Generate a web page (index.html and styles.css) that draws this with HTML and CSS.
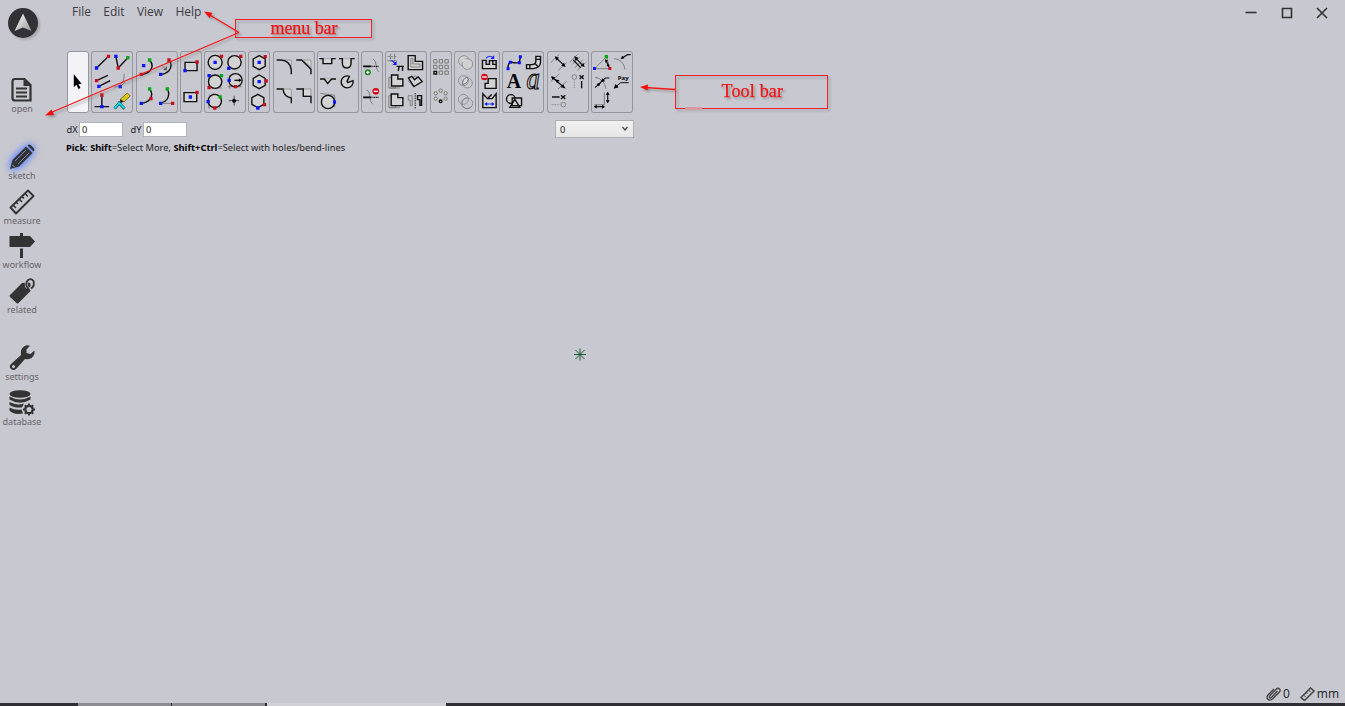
FILE: index.html
```html
<!DOCTYPE html>
<html lang="en">
<head>
<meta charset="utf-8">
<title>Sketch</title>
<link rel="stylesheet" href="styles.css">
</head>
<body>
<div class="app">
  <aside class="side">
    <svg class="logo" width="40" height="42" viewBox="0 0 40 42"><defs><linearGradient id="m" x1="0" x2="1" y1="0" y2="1"><stop offset="0" stop-color="#fff"/><stop offset="1" stop-color="#999"/></linearGradient></defs><circle cx="20" cy="20" r="15" fill="#313136"/><path d="M20 10.500 28.500 28 20 24.500 11.500 28Z" fill="url(#m)"/></svg>
    <a class="nav open"><svg viewBox="0 0 26 26"><path d="M6 2H15.500L21.500 8V23.500H6Q3.500 23.500 3.500 21V4.500Q3.500 2 6 2Z" fill="none" stroke="#333" stroke-width="2.200"/><path d="M14.500 2V9H21.500Z" fill="#333"/><path d="M7 11.500H18M7 15.500H18M7 19.500H18" stroke="#333" stroke-width="1.800"/></svg><span>open</span></a>
    <a class="nav sketch"><svg viewBox="0 0 26 26"><path d="M1 25 3.500 16 17 2.500 23.500 9 10 22.500Z"/><path d="M18.500 1.500Q20 0 21.500 1L25 4.500Q26 6 24.500 7.500Z"/><path d="M6 17 17 6M9 20 20 9" stroke="#7688c4" stroke-width="1"/><path d="M3.500 21 5.500 23" stroke="#9ab" stroke-width="1"/></svg><span>sketch</span></a>
    <a class="nav measure"><svg viewBox="0 0 26 26"><path d="M1.500 18.500 19 1.500 24.500 7 7 24.500Z" fill="none" stroke="#333" stroke-width="1.900" stroke-linejoin="round"/><path d="M4 16 7 19M7 13 9 15M10 10 13 13M13 7.500 15 9.500M16 4.500 19 7.500" stroke="#333" stroke-width="1.600"/></svg><span>measure</span></a>
    <a class="nav"><svg viewBox="0 0 26 26"><path d="M11 0H14V3H21L26 8.500 21 14H0.500V3H11ZM11 15.500H14V25H11Z"/></svg><span>workflow</span></a>
    <a class="nav related"><svg viewBox="0 0 26 26"><path d="M1 17 13 5 20 4.500Q22 5 21.500 7V13L9.500 25Q8.500 26 7.500 25L1 19Q0 18 1 17Z"/><path d="M18.500 10Q16 6 18.500 2.500 22-.5 24.500 3 26 8 20.500 11" fill="none" stroke="#c8c8d0" stroke-width="3"/><path d="M18.500 10Q16 6 18.500 2.500 22-.5 24.500 3 26 8 22 10.500" fill="none" stroke="#333" stroke-width="1.800"/></svg><span>related</span></a>
    <a class="nav settings"><svg viewBox="0 0 26 26"><path fill-rule="evenodd" d="M12 10Q11 4 15 1.500 18-.5 21 .8L17.500 4.500V8L21.500 9 25.500 5.500Q26 10 22.500 13 19 15 16 14L7 24Q4.500 26 2 24 -.5 21.500 2 19ZM4.500 20A1.500 1.500 0 1 0 4.500 23 1.500 1.500 0 1 0 4.500 20Z"/></svg><span>settings</span></a>
    <a class="nav database"><svg viewBox="0 0 26 26"><ellipse cx="11" cy="4" rx="10.500" ry="3.800"/><path d="M.5 6.500Q11 12.500 21.500 6.500V9.500Q11 16 .5 9.500ZM.5 12Q8 16 15 13.500L13 17.500Q5 18 .5 15ZM.5 17.500Q6 20.500 12.500 19.500L14 23.500Q4 25 .5 20.500Z"/><circle cx="20" cy="19.500" r="3.700" fill="none" stroke="#333" stroke-width="2.300"/><path d="M20 13.500V16M20 23V25.500M14 19.500H16.500M23.500 19.500H26M15.800 15.300 17.500 17M22.500 22 24.200 23.700M15.800 23.700 17.500 22M22.500 17 24.200 15.300" stroke="#333" stroke-width="2"/></svg><span>database</span></a>
  </aside>

  <main class="main">
    <header class="top">
      <nav class="menu"><span>File</span><span>Edit</span><span>View</span><span>Help</span></nav>
      <div class="win">
        <svg viewBox="0 0 12 12"><path d="M.5 5.500H11.500"/></svg>
        <svg viewBox="0 0 12 12"><path d="M1.500 1.500H10.500V10.500H1.500Z"/></svg>
        <svg viewBox="0 0 12 12"><path d="M1 1 11 11M11 1 1 11"/></svg>
      </div>
    </header>

    <div class="tools">
      <div class="grp on"><svg viewBox="21.600 18 66 186"><path d="M42 88V127L50 119 56 132 62 129 56 117H66Z" fill="#000"/></svg></div>

      <div class="grp wide"><svg viewBox="94.400 18 126 186">
        <path class="k" d="M111 69 147 34M169 34 176 69 205 38M111 107 145 91M118 124 152 107M105 185H149M127 185V150"/>
        <path class="g" d="M164 127Q196 123 194 86M182 125 197 111"/>
        <path d="M165 191 179 174 195 191" fill="none" stroke="#064b55" stroke-width="9"/><path d="M165 190 179 174 195 190" fill="none" stroke="#12e6f2" stroke-width="5"/>
        <path d="M182 163 203 144 212 153 193 171Z" fill="#d9c51c" stroke="#584e00" stroke-width="2"/><path d="M182 163 193 171 182 173Z" fill="#111"/>
        <path class="b" d="M106 64h10v10h-10zM164 29h10v10h-10zM113 119h10v10h-10zM177 120h10v10h-10zM122 180h10v10h-10z"/>
        <path class="r" d="M142 29h10v10h-10zM171 64h10v10h-10zM106 102h10v10h-10zM122 145h10v10h-10z"/>
        <path class="n" d="M200 33h10v10h-10z"/></svg></div>

      <div class="grp wide"><svg viewBox="227.100 18 126 186">
        <path class="k" d="M268 45Q282 62 269 78 259 87 243 88M326 45Q339 60 326 77 316 87 301 88M268 132Q280 147 269 163 259 174 243 175M321 132Q330 148 320 163 313 172 301 175"/>
        <path class="g" d="M303 60 316 72M327 45 315 57M301 175H337"/><path d="M308 76 320 76 320 64Z" fill="#555"/>
        <path class="b" d="M245 57h10v10h-10zM296 83h10v10h-10zM238 170h10v10h-10zM296 170h10v10h-10z"/>
        <path class="r" d="M238 83h10v10h-10zM321 40h10v10h-10zM267 156h10v10h-10zM332 170h10v10h-10z"/>
        <path class="n" d="M263 40h10v10h-10zM263 127h10v10h-10zM316 127h10v10h-10z"/></svg></div>

      <div class="grp"><svg viewBox="359.900 18 66 186">
        <path class="kf" d="M375 52H411V77H375ZM372 143H410V170H372Z"/>
        <path class="b" d="M370 72h10v10h-10zM386 151h10v10h-10z"/><path class="r" d="M406 46h10v10h-10zM406 137h10v10h-10z"/></svg></div>

      <div class="grp wide"><svg viewBox="12.600 18 126 186">
        <path class="g" d="M27 92V129H66M83 125H125M90 91V131M28 148 62 190M39 145 67 162M25 164 28 191"/>
        <g class="kf"><circle cx="46" cy="52" r="21"/><circle cx="104" cy="52" r="20"/><circle cx="46" cy="110" r="20"/><circle cx="107" cy="106" r="20"/><circle cx="45" cy="168" r="20"/></g>
        <path class="k" d="M104 106H122"/><path d="M117 100 125 106 117 112Z"/><path class="k" d="M87 167H118M103 152V182" style="stroke-width:2"/><circle cx="103" cy="167" r="6"/>
        <path class="b" d="M41 47h10v10h-10zM82 65h10v10h-10zM23 87h10v10h-10zM83 101h10v10h-10zM20 165h10v10h-10z"/>
        <path class="r" d="M60 29h10v10h-10zM118 29h10v10h-10zM23 123h10v10h-10zM102 120h10v10h-10zM40 184h10v10h-10z"/>
        <path class="n" d="M60 87h10v10h-10zM56 151h10v10h-10z"/></svg></div>

      <div class="grp"><svg viewBox="145.400 18 66 186">
        <path class="kf" d="M179 32 197 42V64L179 74 161 64V42ZM179 90 197 100V121L179 131 161 121V100ZM175 148 193 158V178L175 188 157 178V158Z"/>
        <path class="b" d="M174 47h10v10h-10zM174 105h10v10h-10zM170 184h10v10h-10z"/><path class="r" d="M192 30h10v10h-10zM195 103h10v10h-10zM190 174h10v10h-10z"/></svg></div>

      <div class="grp wide"><svg viewBox="218.100 18 126 186">
        <path d="M250 45H273V73Q270 52 250 45ZM310 45H332V68ZM248 132H273V158Q252 153 248 132ZM309 132H332V153H309Z" fill="#d5d5d5" stroke="#999" stroke-width="3"/>
        <path class="k" d="M229 45H242Q270 47 273 75V88M288 45H304L332 73V88M229 132H248Q251 156 273 159V175M288 132H309V154H332V175"/></svg></div>

      <div class="grp wide"><svg viewBox="14.900 18 126 186">
        <path d="M33 41H59V56H33ZM91 41H117V58Q104 76 91 58ZM36 101 48 115 62 101Z" fill="#d5d5d5" stroke="#999" stroke-width="2"/><path class="g" d="M25 145 68 151M68 151V186"/>
        <path class="k" d="M22 41H33V56H59V41H71M81 41H91V54Q91 69 104 69 117 69 117 54V41H128M24 102H37L47 115 59 102H72"/>
        <path class="kf" d="M105 109 112 94A18 18 0 1 0 123 107L107 113Z"/>
        <circle class="kf" cx="48" cy="171" r="20"/><path class="b" d="M63 166h9v10h-9z"/></svg></div>

      <div class="grp"><svg viewBox="147.600 18 66 186">
        <path class="g" d="M183 42Q191 43 193 61 194 76 202 81M164 135Q174 137 174 156 176 174 183 178"/>
        <path d="M154 64H179M154 157H179" stroke="#000" stroke-width="5"/><path d="M182 64H200M182 157H200" stroke="#000" stroke-width="4" stroke-dasharray="3 2"/>
        <circle cx="168" cy="82" r="9" fill="#12851c"/><path d="M163 82H173M168 77V87" stroke="#fff" stroke-width="3.500"/><circle cx="192" cy="139" r="10" fill="#d20a18"/><path d="M186 139H198" stroke="#fff" stroke-width="4"/></svg></div>

      <div class="grp wide"><svg viewBox="220.400 18 126 186">
        <path class="g" d="M228 35H257M228 47H257M237 26V53M249 26V53" style="stroke-dasharray:7 2"/><path d="M240 46 252 56" stroke="#2030ff" stroke-width="4"/><path class="b" d="M255 48V60H243Z"/><path class="k" d="M255 64H277M260 78 263 64M273 64V78"/>
        <path class="kf" d="M290 32H311V49H333V74H290Z"/><path class="g" d="M298 40H304V57H325V66H298Z"/>
        <path class="g" d="M232 97H252V129H232ZM232 129H265M232 152H252V188H232ZM232 188H265M291 108 312 92 324 108 304 123Z"/>
        <path class="kf" d="M240 90H259V102H274V123H240ZM239 147H259V158H274V182H239ZM291 99 301 94 309 104 320 96 332 110 307 125Z"/>
        <path class="g" d="M290 152H302V182H296V165H290Z"/><path class="k" d="M329 152H318V164H325V181H330V152Z"/><path d="M311 144V190" stroke="#111" stroke-width="3" stroke-dasharray="4 3"/></svg></div>

      <div class="grp"><svg viewBox="14.100 18 66 186">
        <g fill="#d0d0d0" stroke="#777" stroke-width="3"><path d="M25 44h10v10h-10zM42 44h10v10h-10zM59 44h10v10h-10zM25 61h10v10h-10zM42 61h10v10h-10zM59 61h10v10h-10zM42 78h10v10h-10zM59 78h10v10h-10z"/><circle cx="46" cy="137" r="5"/><circle cx="31" cy="145" r="5"/><circle cx="61" cy="145" r="5"/><circle cx="31" cy="161" r="5"/><circle cx="61" cy="161" r="5"/></g>
        <path class="kf" d="M26 79h8v8h-8z"/><circle class="kf" cx="46" cy="169" r="4"/></svg></div>

      <div class="grp"><svg viewBox="86.900 18 66 186"><g fill="none" stroke="#929296" stroke-width="3"><g fill="#d0d0d2"><circle cx="117" cy="48" r="16"/><circle cx="127" cy="57" r="16"/></g><path d="M111 40 135 64" stroke="#d0d0d2" stroke-width="14"/><circle cx="115" cy="107" r="15"/><circle cx="127" cy="114" r="15"/><circle cx="115" cy="163" r="15"/><circle cx="127" cy="175" r="16"/></g><path d="M114 119Q109 103 128 96 133 112 114 119Z" fill="#ddd" stroke="#777" stroke-width="3"/><path d="M127 159A16 16 0 1 0 139 184" fill="none" stroke="#888" stroke-width="3"/></svg></div>

      <div class="grp"><svg viewBox="159.600 18 66 186">
        <path class="kf" d="M173 46H184V58H194V47H214V71H173ZM181 130V115H190V101H214V130ZM174 146 188 161H202L214 146V188H174Z"/><path class="k" d="M204 47V58H214M188 161 201 148"/>
        <path d="M184 39Q195 29 204 38M182 177H205" fill="none" stroke="#1530f5" stroke-width="3.500"/><path class="b" d="M208 31V42H197ZM179 177 187 171V183ZM209 177 201 171V183Z"/>
        <circle cx="179" cy="96" r="10" fill="#d20a18"/><path d="M172 96H186" stroke="#fff" stroke-width="4"/></svg></div>

      <div class="grp wide"><svg viewBox="232.400 18 126 186">
        <path class="k" d="M250 72Q250 55 258 51 275 55 284 53L288 35"/><path class="b" d="M246 67h9v9h-9zM253 47h9v9h-9zM280 49h9v9h-9zM283 31h9v9h-9z"/>
        <path class="kf" d="M334 34H348V52Q347 69 326 71H306V59H323Q334 58 334 49ZM334 43H348M316 59V71M332 56 341 65"/>
        <text x="247" y="130" font-size="60" font-weight="bold" textLength="43" lengthAdjust="spacingAndGlyphs">A</text>
        <text x="306" y="131" font-size="92" textLength="40" lengthAdjust="spacingAndGlyphs" style="fill:#d3d3d3;stroke:#111;stroke-width:3.500px;font-style:italic">a</text>
        <circle class="kf" cx="259" cy="162" r="13"/><path class="kf" d="M263 159H291V182H263ZM271 163 286 187H256Z"/></svg></div>

      <div class="grp wide"><svg viewBox="20.100 18 126 186">
        <path class="g" d="M31 53 57 28M53 77 79 53M88 52 112 28M111 76 137 52M96 58 118 36M104 68 128 44M31 110 57 87M53 132 79 109M38 98 78 132"/>
        <path class="k" d="M48 39 72 62M105 38 128 62M99 45 121 68M35 96 73 129" style="stroke-width:3.500"/>
        <path d="M43 34 56 38 48 47ZM76 66 63 62 71 53ZM102 33 114 39 105 47ZM133 66 121 62 129 53ZM44 103 58 106 50 114ZM74 129 61 127 69 118ZM32 94 45 97 37 105Z"/>
        <path class="k" d="M118 91 130 102M130 91 118 102M124 108V130M35 156H58M62 151 75 162M75 151 62 162" style="stroke-width:4"/>
        <g fill="none" stroke="#888" stroke-width="3"><circle cx="102" cy="96" r="7"/><circle cx="69" cy="179" r="7"/><path d="M102 106V131M34 179H61" stroke-dasharray="3 2"/></g></svg></div>

      <div class="grp wide"><svg viewBox="152.900 18 126 186">
        <path class="g" d="M164 71 199 35 210 71ZM222 41Q250 43 255 74M165 97Q192 100 198 132M193 142V179H163"/>
        <path class="k" d="M198 46 206 65M272 29H262L247 39M208 99H196L165 128" style="stroke-width:3.500"/><path d="M195 43 204 47 196 53ZM208 68 199 61 207 58ZM241 43 247 32 253 40ZM181 111 188 100 195 109ZM183 112 177 124 170 117Z"/>
        <path class="b" d="M159 66h9v9h-9z"/><path class="r" d="M205 66h9v9h-9z"/><path class="n" d="M194 30h10v10h-10z"/>
        <text x="233" y="106" font-size="18" font-weight="bold" textLength="33" style="font-family:'Open Sans',sans-serif">Pay</text><path class="k" d="M266 113H242L226 126" style="stroke-width:3"/><path d="M221 131 226 117 236 127Z"/>
        <path class="k" d="M203 144V170M166 185H191" style="stroke-width:3.500"/><path d="M203 140 197 149H209ZM203 175 197 166H209ZM161 185 170 179V191ZM195 185 186 179V191Z"/></svg></div>
    </div>

    <div class="coords"><label>dX</label><span class="field">0</span><label class="dy">dY</label><span class="field">0</span>
      <div class="drop"><span>0</span><svg width="8" height="6" viewBox="0 0 8 6"><path d="M1.500 1 4 4 6.500 1" fill="none" stroke="#444" stroke-width="1.200"/></svg></div></div>
    <div class="hint"><b>Pick</b>: <b>Shift</b>=Select More, <b>Shift+Ctrl</b>=Select with holes/bend-lines</div>
    <div class="canvas"></div>
    <footer class="status">
      <svg width="15" height="14" viewBox="0 0 15 14"><path d="M11.500 4 5.500 10.500Q4 11.500 3.500 10.500T4.500 8L10 2.500Q12 .5 13.500 2T13 5.500L6.500 12Q3.500 14 1.800 12.200T2 8L8 2" fill="none" stroke="#444" stroke-width="1.400"/></svg><span class="count">0</span>
      <svg width="15" height="14" viewBox="0 0 15 14"><path d="M1 10.500 10.500 1 14 4 4.500 13.500Z" fill="none" stroke="#444" stroke-width="1.500"/><path d="M3.500 8 5.500 10M6 5.500 7.500 7M8.500 3 10.500 5" stroke="#444"/></svg><span>mm</span>
    </footer>
  </main>
</div>
<div class="taskbar"><i class="t1"></i><i class="t1"></i><i class="t2"></i></div>

<svg class="notes" width="1345" height="706" viewBox="0 0 1345 706">
  <path d="M574 354.500H586M580 348.500V360.500M575.500 350 584.500 359M584.500 350 575.500 359" stroke="#245c36" stroke-width="1"/>
  <g class="callout">
    <rect x="235.500" y="19.500" width="136" height="18"/><rect x="675.500" y="75.500" width="152" height="33"/>
    <path d="M239 32.500 209 14.500M239 32.500 50 113M675 89.500 645 87.500"/>
    <path class="head" d="M204 11.500 212.500 12.800 209.500 18ZM45 115.500 51.500 109.500 54 115ZM640 87 648 84.500 647.600 90.500Z"/>
    <text x="270.500" y="33.500" font-size="18" textLength="67">menu bar</text>
    <text x="721.500" y="97" font-size="18" textLength="61.500">Tool bar</text>
  </g>
  <path d="M685 108.500H702" stroke="#d59aa2" stroke-width="3"/>
</svg>
</body>
</html>
```
FILE: styles.css
```css
* { box-sizing: border-box; }
body { margin: 0; width: 1345px; height: 706px; overflow: hidden; position: relative; display: flex; flex-direction: column; background: #c8c8d0; color: #333; font-family: "Noto Sans", "Open Sans", sans-serif; }
.app { display: flex; height: 703px; }
.side { width: 67px; display: flex; flex-direction: column; }
.logo { margin: 3px 0 0 3px; filter: drop-shadow(2px 2px 1px #8888); overflow: visible; }
.nav { width: 44px; height: 44.5px; display: flex; flex-direction: column; align-items: center; font: 9px/11px "Noto Sans", sans-serif; color: #66666b; }
.nav svg { width: 26px; height: 26px; fill: #333; flex: none; overflow: visible; }
.nav span { white-space: nowrap; }
.nav.open { margin-top: 32px; height: 67px; }
.nav.sketch svg { filter: drop-shadow(0 0 3px #5f83ff) drop-shadow(0 0 3px #7c97f5); }
.nav.sketch { height: 45px; }
.nav.measure { height: 44px; }
.nav.related { height: 67.5px; }
.main { flex: 1; display: flex; flex-direction: column; }
.top { height: 51px; display: flex; justify-content: space-between; align-items: flex-start; }
.menu { display: flex; gap: 12.3px; padding: 3px 0 0 5px; font-family: "Open Sans", sans-serif; font-size: 12px; line-height: 18px; color: #3c3c42; }
.win { display: flex; gap: 23.5px; padding: 7px 17px 0 0; }
.win svg { width: 12px; height: 12px; fill: none; stroke: #333; stroke-width: 1.6; }
.tools { display: flex; gap: 2.25px; height: 62px; }
.grp { width: 22px; height: 62px; flex: none; border-radius: 3px; box-shadow: inset 0 0 0 1px #96969d; }
.grp.wide { width: 42px; }
.grp.on { background: #f2f2f7; }
.grp svg { display: block; width: 100%; height: 62px; font-family: "Liberation Serif", serif; }
.k, .kf { fill: none; stroke: #111; stroke-width: 4.2; }
.kf { fill: #d3d3d3; }
.g { fill: none; stroke: #808080; stroke-width: 3; }
.r { fill: #c8101c; }
.b { fill: #0b14ff; }
.n { fill: #08a616; }
.coords { display: flex; align-items: center; height: 18px; margin-top: 7px; font-size: 9.3px; color: #222; }
.coords label { width: 12px; text-indent: -.5px; }
.coords .dy { margin-left: 8px; }
.field { width: 44px; height: 15px; line-height: 14px; padding-left: 2px; border: 1px solid #b3b3ba; background: #fff; }
.drop { width: 79px; height: 18px; margin-left: 368px; padding: 0 4px; border: 1px solid #b0b0b4; background: linear-gradient(#f1f1f1, #e6e6e6); display: flex; align-items: center; justify-content: space-between; }
.hint { margin: 2px 0 0 -1px; height: 14px; font-size: 9.33px; line-height: 15px; white-space: nowrap; color: #222; }
.hint b { color: #000; }
.canvas { flex: 1; }
.status { height: 18px; display: flex; align-items: center; justify-content: flex-end; padding: 0 6px 1px 0; font-family: "Open Sans", sans-serif; font-size: 12px; gap: 2px; color: #222; }
.count { margin-right: 8px; }
.taskbar { height: 3px; background: #2f2f33; display: flex; gap: 1px; padding-left: 78px; }
.t1 { width: 93px; background: #8d8d91; }
.t2 { width: 179px; margin-left: 1px; background: #d0d0d6; }
.notes { position: absolute; inset: 0; pointer-events: none; }
.callout { filter: drop-shadow(2px 2px 1px #77777799); font-family: "Liberation Serif", serif; }
.callout rect { fill: none; stroke: #ef2028; stroke-width: 1; }
.callout path { stroke: #f51818; stroke-width: 1.3; fill: none; }
.callout .head { fill: #f01010; stroke: none; }
.callout text { fill: #f51212; stroke: #f51212; stroke-width: .25; }
```
